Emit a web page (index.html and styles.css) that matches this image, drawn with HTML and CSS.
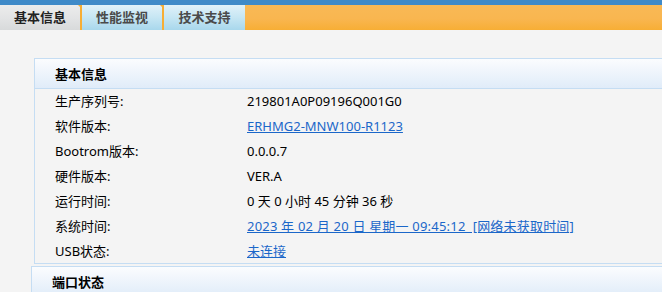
FILE: index.html
```html
<!DOCTYPE html>
<html lang="zh-CN">
<head>
<meta charset="UTF-8" />
<title>基本信息</title>
<link rel="stylesheet" href="styles.css">
</head>
<body>

<div class="topbar"></div>

<div class="tabs">
  <div class="tab active">基本信息</div>
  <div class="tab">性能监视</div>
  <div class="tab">技术支持</div>
</div>

<div class="content">
  <!-- 基本信息 -->
  <div class="panel">
    <div class="panel-head">基本信息</div>
    <table class="info">
      <tr><td class="label">生产序列号:</td><td>219801A0P09196Q001G0</td></tr>
      <tr><td class="label">软件版本:</td><td><a href="#">ERHMG2-MNW100-R1123</a></td></tr>
      <tr><td class="label">Bootrom版本:</td><td>0.0.0.7</td></tr>
      <tr><td class="label">硬件版本:</td><td>VER.A</td></tr>
      <tr><td class="label">运行时间:</td><td>0 天 0 小时 45 分钟 36 秒</td></tr>
      <tr><td class="label">系统时间:</td><td><a href="#" class="wide">2023 年 02 月 20 日 星期一 09:45:12 &nbsp;[网络未获取时间]</a></td></tr>
      <tr><td class="label">USB状态:</td><td><a href="#">未连接</a></td></tr>
    </table>
  </div>

  <!-- 端口状态 -->
  <div class="panel panel-port">
    <div class="panel-head">端口状态</div>
  </div>
</div>

</body>
</html>
```

FILE: styles.css
```css
html, body {
  margin: 0;
  padding: 0;
}
body {
  background: #f4f4f4;
  font-family: 'Noto Sans', 'Noto Sans CJK SC', sans-serif;
  font-size: 13px;
  color: #000;
  overflow: hidden;
}
.topbar {
  height: 5px;
  background: #3f8ac8;
}
.tabs {
  display: flex;
  height: 25px;
  background: linear-gradient(#f9b955, #f9b650 55%, #f7ae35);
}
.tab {
  width: 80px;
  line-height: 25px;
  text-align: center;
  font-weight: 700;
  color: #4a4a4a;
  background: linear-gradient(#e0f1f9, #c6e6f3 50%, #a8d7ec);
  border-right: 2px solid #f7ae35;
  position: relative;
}
.tab:last-child {
  width: 81px;
  border-right: none;
}
.tab.active {
  color: #222;
  background: linear-gradient(#ececec, #e3e4e5 50%, #d8dadb);
}
.tab::after {
  content: "";
  position: absolute;
  top: 0;
  right: -4px;
  border-left: 3px solid transparent;
  border-right: 3px solid transparent;
  border-top: 3px solid #f7ae35;
}
.tab:last-child::after {
  display: none;
}
.content {
  padding: 28px 0 0 34px;
}
.panel {
  border: 1px solid #c5ddf3;
  border-right: none;
  background: #f4f4f4;
}
.panel-head {
  height: 29px;
  line-height: 30px;
  padding-left: 20px;
  font-weight: 700;
  background: linear-gradient(#fbfcfe, #e0ecf9);
  border-bottom: 1px solid #c5ddf3;
}
.info {
  border-collapse: collapse;
  margin: -1px 0 0 20px;
}
.info td {
  height: 25px;
  padding: 0;
  white-space: nowrap;
}
.info .label {
  width: 192px;
}
.info a {
  color: #1b67c9;
  text-decoration: underline;
}
.info a.wide {
  letter-spacing: 0.2px;
}
.panel-port {
  margin: 2px 0 0 -3px;
}
```
